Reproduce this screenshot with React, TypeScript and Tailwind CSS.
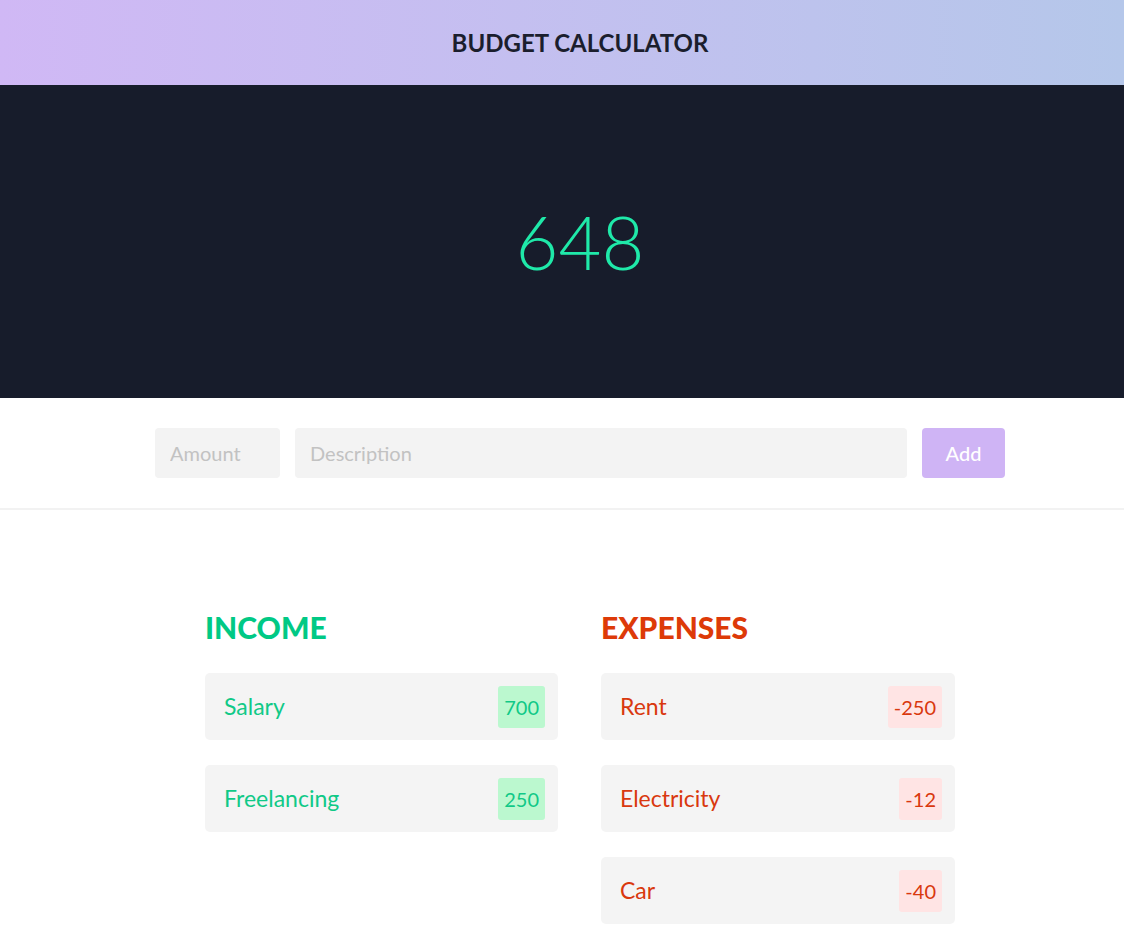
import React from "react";

type Item = { label: string; amount: number };

const income: Item[] = [
  { label: "Salary", amount: 700 },
  { label: "Freelancing", amount: 250 },
];

const expenses: Item[] = [
  { label: "Rent", amount: -250 },
  { label: "Electricity", amount: -12 },
  { label: "Car", amount: -40 },
];

const EntryRow = ({ item, kind }: { item: Item; kind: "income" | "expense" }) => {
  const isIncome = kind === "income";
  return (
    <li
      className={
        "flex items-center justify-between h-[67px] pl-[19px] pr-[13px] rounded-[5px] bg-[#f4f4f4] " +
        (isIncome ? "text-[#10c987]" : "text-[#d9380e]")
      }
    >
      <span className="text-[23px]">{item.label}</span>
      <span
        className={
          "h-[42px] flex items-center px-[6px] rounded-[3px] text-[20px] " +
          (isIncome ? "bg-[#bbf8cf]" : "bg-[#ffe4e4]")
        }
      >
        {item.amount}
      </span>
    </li>
  );
};

export default function App() {
  const total = [...income, ...expenses].reduce((sum, i) => sum + i.amount, 0);

  return (
    <div className="min-h-screen bg-white font-['Lato',sans-serif]">
      {/* Header */}
      <header className="h-[85px] flex items-center justify-center pl-[36px] bg-gradient-to-r from-[#d0b8f5] to-[#b5c7ea]">
        <h1 className="text-[24px] font-bold text-[#1b1e2d]">BUDGET CALCULATOR</h1>
      </header>

      {/* Balance */}
      <section className="h-[313px] flex items-center justify-center pl-[36px] bg-[#171c2b]">
        <span className="text-[74px] font-light text-[#1fe9a9] leading-none">{total}</span>
      </section>

      {/* Form */}
      <section className="flex justify-center gap-[15px] pl-[36px] py-[30px] border-b-2 border-[#f2f2f2]">
        <input
          placeholder="Amount"
          className="w-[125px] h-[50px] px-[15px] rounded-[4px] bg-[#f3f3f3] text-[20px] placeholder:text-[#c2c2c2] outline-none"
        />
        <input
          placeholder="Description"
          className="w-[612px] h-[50px] px-[15px] rounded-[4px] bg-[#f3f3f3] text-[20px] placeholder:text-[#c2c2c2] outline-none"
        />
        <button className="w-[83px] h-[50px] rounded-[4px] bg-[#cfb4f5] text-white text-[20px] font-medium">
          Add
        </button>
      </section>

      {/* Lists */}
      <section className="flex justify-center gap-[43px] pl-[36px] pt-[98px] pb-8">
        <div className="w-[353px]">
          <h2 className="text-[30px] font-black text-[#00c985] leading-[38px]">INCOME</h2>
          <ul className="mt-[27px] flex flex-col gap-[25px]">
            {income.map((i) => (
              <EntryRow key={i.label} item={i} kind="income" />
            ))}
          </ul>
        </div>
        <div className="w-[354px]">
          <h2 className="text-[30px] font-black text-[#dd3a08] leading-[38px]">EXPENSES</h2>
          <ul className="mt-[27px] flex flex-col gap-[25px]">
            {expenses.map((i) => (
              <EntryRow key={i.label} item={i} kind="expense" />
            ))}
          </ul>
        </div>
      </section>
    </div>
  );
}
